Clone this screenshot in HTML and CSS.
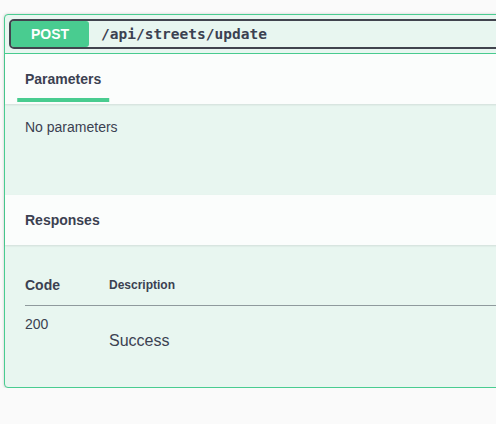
FILE: index.html
```html
<!DOCTYPE html>
<html lang="en">
<head>
<meta charset="utf-8">
<title>POST /api/streets/update</title>
<link rel="stylesheet" href="styles.css">
</head>
<body>
<div class="opblock">
  <div class="summary">
    <div class="summary-control">
      <span class="method">POST</span>
      <span class="path">/api/streets/update</span>
    </div>
  </div>
  <div class="section-header">
    <h4 class="tab-item"><span>Parameters</span></h4>
  </div>
  <div class="params-body">
    <p class="no-params">No parameters</p>
  </div>
  <div class="section-header">
    <h4 class="plain-title">Responses</h4>
  </div>
  <div class="responses-inner">
    <table class="responses-table">
      <thead>
        <tr>
          <td class="col-code">Code</td>
          <td class="col-desc">Description</td>
        </tr>
      </thead>
      <tbody>
        <tr>
          <td class="cell-code">200</td>
          <td class="cell-desc"><p>Success</p></td>
        </tr>
      </tbody>
    </table>
  </div>
</div>
</body>
</html>
```

FILE: styles.css
```css
html, body {
  margin: 0;
  padding: 0;
  background: #fafafa;
  overflow: hidden;
  font-family: "Liberation Sans", Arial, sans-serif;
  color: #3b4151;
}

.opblock {
  margin: 14px 0 0 4px;
  width: 720px;
  border: 1px solid #49cc90;
  border-radius: 4px;
  background: #e8f6f0;
  box-shadow: 0 0 3px rgba(0, 0, 0, 0.19);
}

.summary {
  padding: 6px 6px 6px 6px;
  border-bottom: 1px solid #49cc90;
}

.summary-control {
  display: flex;
  align-items: center;
  outline: 2px solid #41444e;
  border-radius: 3px;
}

.method {
  width: 78px;
  height: 26px;
  background: #49cc90;
  color: #fff;
  font-size: 14px;
  font-weight: 700;
  display: flex;
  align-items: center;
  justify-content: center;
  border-radius: 3px;
}

.path {
  margin-left: 12px;
  font-family: "DejaVu Sans Mono", "Liberation Mono", monospace;
  font-weight: 700;
  font-size: 14.5px;
  color: #3b4151;
}

.section-header {
  height: 50px;
  box-sizing: border-box;
  padding: 0 20px;
  display: flex;
  align-items: center;
  background: rgba(255, 255, 255, 0.8);
  box-shadow: 0 1px 2px rgba(0, 0, 0, 0.1);
}

.section-header h4 {
  margin: 0;
  font-size: 14px;
  font-weight: 700;
  color: #3b4151;
}

.tab-item span {
  position: relative;
  display: inline-block;
}

.tab-item span::after {
  content: "";
  position: absolute;
  left: 50%;
  bottom: -15px;
  width: 120%;
  height: 4px;
  transform: translateX(-50%);
  background: #49cc90;
}

.params-body {
  height: 91px;
  box-sizing: border-box;
  padding: 15px 20px;
}

.no-params {
  margin: 0;
  font-size: 14px;
}

.responses-inner {
  padding: 20px 20px 20px 20px;
}

.responses-table {
  width: 100%;
  border-collapse: collapse;
}

.responses-table thead td {
  padding: 12px 0 12px;
  font-weight: 700;
  border-bottom: 1px solid rgba(59, 65, 81, 0.3);
}

.col-code {
  width: 84px;
  font-size: 14px;
}

.col-desc {
  font-size: 12px;
}

.responses-table tbody td {
  padding: 10px 0;
  vertical-align: top;
}

.cell-code {
  font-size: 14px;
}

.cell-desc p {
  margin: 16px 0 7px;
  font-size: 16px;
}
```
